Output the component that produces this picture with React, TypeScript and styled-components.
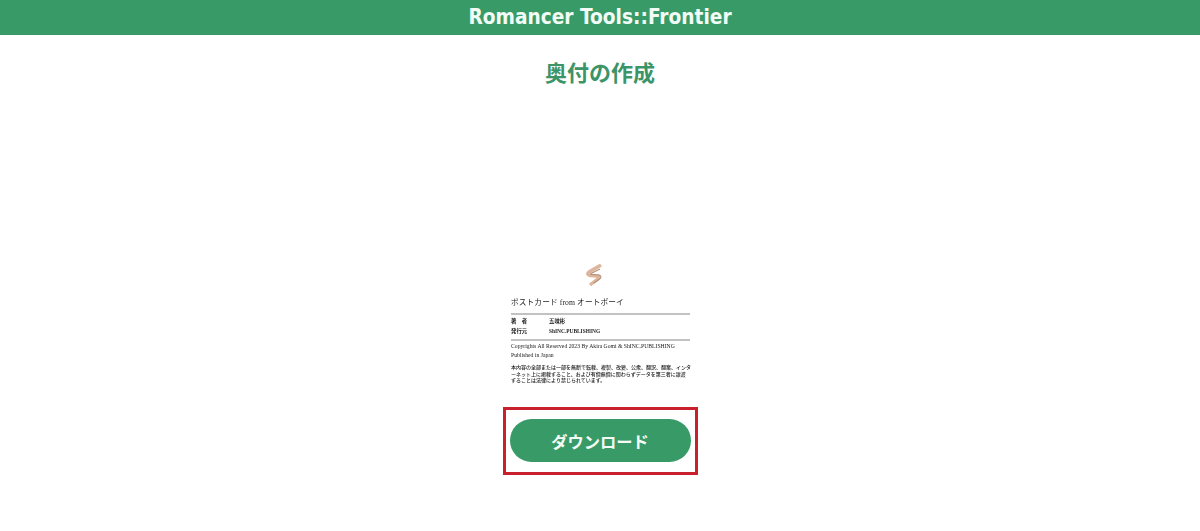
import React from "react";
import styled, { createGlobalStyle } from "styled-components";

const Global = createGlobalStyle`
  html, body { margin: 0; padding: 0; background: #fff; }
  body { font-family: "DejaVu Sans", "Noto Sans CJK JP", sans-serif; }
`;
const Page = styled.div`
  width: 1200px; height: 531px; overflow: hidden;
  display: flex; flex-direction: column; align-items: center;
`;
const Header = styled.header`
  width: 100%; height: 35px; background: #389b67; color: #f2fbf6;
  display: flex; align-items: center; justify-content: center;
  font-family: "DejaVu Sans Condensed", "DejaVu Sans", sans-serif;
  font-stretch: condensed;
  font-size: 20.7px; font-weight: 700; line-height: 1;
`;
const Title = styled.h1`
  margin: 22px 0 0; height: 28px; line-height: 28px;
  font-family: "Noto Sans CJK JP", sans-serif; font-size: 22px; font-weight: 700;
  color: #3c9469;
`;
const Colophon = styled.section`
  width: 180px; margin-top: 179px; height: 126px; padding-left: 1px; box-sizing: border-box;
  display: flex; flex-direction: column; align-items: stretch;
  font-family: "Liberation Serif", "Noto Sans CJK JP", serif; color: #1c1c1c;
  filter: blur(0.35px);
`;
const Logo = styled.svg`
  width: 20px; height: 23px; align-self: center; margin-left: -11px; display: block;
`;
const BookName = styled.div`
  margin-top: 11px; font-size: 7.7px; line-height: 10px; letter-spacing: 0.1px;
`;
const Rule = styled.div<{ $top: number }>`
  height: 2px; background: #c2c2c2; margin-top: ${(p) => p.$top}px;
`;
const MetaList = styled.div`
  margin-top: 2px; display: flex; flex-direction: column; gap: 1px;
`;
const MetaRow = styled.div`
  display: grid; grid-template-columns: 38px 1fr; font-size: 5.4px; line-height: 9px; font-weight: 600;
`;
const Copyright = styled.div`
  margin-top: 1px; font-size: 5.7px; line-height: 8.5px; white-space: nowrap;
`;
const Notice = styled.div`
  margin-top: 5px; font-size: 5px; line-height: 6.6px; font-weight: 500;
  font-family: "Noto Sans CJK JP", serif; white-space: nowrap;
`;
const Highlight = styled.div`
  margin-top: 17px; width: 195px; height: 68px; box-sizing: border-box; padding-bottom: 1px;
  border: 3px solid #c8202c; display: flex; align-items: center; justify-content: center;
`;
const DownloadButton = styled.button`
  width: 181px; height: 43px; border: 0; border-radius: 22px; background: #389b67; color: #f4fbf7;
  font-family: "Noto Sans CJK JP", sans-serif; font-size: 16.3px; font-weight: 700; padding: 0;
`;

export default function App() {
  return (
    <Page>
      <Global />
      <Header>Romancer Tools::Frontier</Header>
      <Title>奥付の作成</Title>
      <Colophon>
        <Logo viewBox="0 0 20 23">
          <path d="M16 1 L4 8 Q1 10.5 5 11.5 L13 12 Q15 13 12 15.5 L5 21" fill="none" stroke="#dcb59c" strokeWidth="3.4" />
          <path d="M15 5 L6 9.5 Q5 10.5 7 10.5 L14 11 Q18 12.5 14 15.5 L9 19" fill="none" stroke="#b5917a" strokeWidth="1.1" />
        </Logo>
        <BookName>ポストカード from オートボーイ</BookName>
        <Rule $top={5} />
        <MetaList>
          <MetaRow><span>著　者</span><span>五味彬</span></MetaRow>
          <MetaRow><span>発行元</span><span>ShINC.PUBLISHING</span></MetaRow>
        </MetaList>
        <Rule $top={3} />
        <Copyright>
          Copyrights All Reserved 2023 By Akira Gomi &amp; ShINC.PUBLISHING<br />Published in Japan
        </Copyright>
        <Notice>
          本内容の全部または一部を無断で転載、複製、改變、公衆、翻訳、翻案、インタ<br />
          ーネット上に掲載すること、および有償無償に関わらずデータを第三者に譲渡<br />
          することは法律により禁じられています。
        </Notice>
      </Colophon>
      <Highlight>
        <DownloadButton>ダウンロード</DownloadButton>
      </Highlight>
    </Page>
  );
}
